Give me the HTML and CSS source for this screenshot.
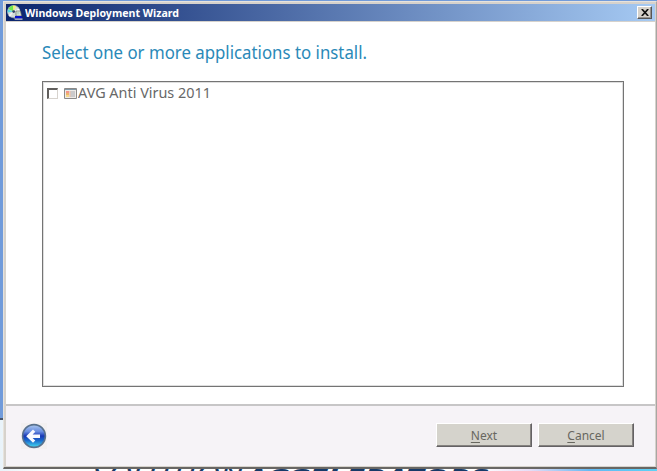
FILE: index.html
```html
<!DOCTYPE html>
<html lang="en">
<head>
<meta charset="utf-8">
<title>Windows Deployment Wizard</title>
<link rel="stylesheet" href="styles.css">
</head>
<body>
<div class="desktop">
  <div class="brand" aria-hidden="true"><svg width="420" height="24"><text class="thin" x="0" y="15" textLength="151" lengthAdjust="spacingAndGlyphs">SOLUTION</text><text class="bold" x="153" y="18" textLength="243" lengthAdjust="spacingAndGlyphs">ACCELERATORS</text></svg></div>
  <main class="window">
    <header class="titlebar">
      <svg class="app-icon" width="16" height="16" viewBox="0 0 16 16">
        <circle cx="6.7" cy="6.6" r="6.2" fill="#d5dedb" stroke="#a5adb5" stroke-width=".7"/>
        <path d="M6.7 6.6 1.2 4Q3 1 6 .6Z" fill="#6ce84c"/>
        <path d="M6.7 6.6 6 .5 9 1Z" fill="#f3ef70"/>
        <path d="M6.7 6.6.6 7.5.9 4.6Z" fill="#54dce5"/>
        <path d="M6.7 6.6 12 3.5 13 6Z" fill="#fff"/>
        <path d="M6.7 6.6 3 12 1.4 10Z" fill="#f5f4f5"/>
        <circle cx="6.7" cy="6.6" r="1.4" fill="#344568"/>
        <path d="M9 6h4.5l1 5H9Z" fill="#e8eadf" stroke="#58645d" stroke-width=".7"/>
        <path d="M10 7h2.5v2.5H10Z" fill="#b5d5c3"/>
        <path d="M8 11h6.5l.8 2.5H8Z" fill="#0710cc"/>
        <path d="M7 13.5h8.5v1.2H8Z" fill="#c9ccd7"/>
      </svg>
      <span class="title"><svg width="156" height="16"><text x="0" y="12" textLength="154" lengthAdjust="spacingAndGlyphs">Windows Deployment Wizard</text></svg></span>
      <button class="close" aria-label="Close"><svg width="8" height="7" viewBox="0 0 8 7"><path d="M.8 0 7.2 7M7.2 0 .8 7" stroke="#111" stroke-width="1.7"/></svg></button>
    </header>
    <section class="content">
      <h1><svg width="340" height="30"><text x="0" y="18" textLength="325" lengthAdjust="spacingAndGlyphs">Select one or more applications to install.</text></svg></h1>
      <div class="list">
        <label class="item">
          <span class="check"></span>
          <svg class="item-icon" width="13" height="11" viewBox="0 0 13 11">
            <path d="M.5.5h12v10H.5Z" fill="#eeeae6" stroke="#8b8988"/>
            <path d="M1 1.5h11" stroke="#8097a4"/>
            <path d="M2 3h3v2H2Z" fill="#f59589"/><path d="M2 5h3v2H2Z" fill="#edb36d"/><path d="M2 7h3v2H2Z" fill="#f5d889"/>
            <path d="M6.5 4H11M6.5 6H11M6.5 8H11" stroke="#a8a9b0"/>
            <path d="M6 3v6" stroke="#e2a17e" stroke-width=".7"/>
          </svg>
          <svg class="name" width="140" height="20"><text x="0" y="15" textLength="133" lengthAdjust="spacingAndGlyphs">AVG Anti Virus 2011</text></svg>
        </label>
      </div>
    </section>
    <footer class="footer">
      <button class="back" aria-label="Back">
        <svg width="26" height="26" viewBox="0 0 26 26">
          <defs><linearGradient id="blue" x1="0" y1="0" x2="0" y2="1"><stop offset="0" stop-color="#adc8ee"/><stop offset=".3" stop-color="#6a8fe2"/><stop offset=".5" stop-color="#1837b5"/><stop offset=".7" stop-color="#1a6bcd"/><stop offset="1" stop-color="#46dff2"/></linearGradient></defs>
          <circle cx="13" cy="13" r="11.4" fill="url(#blue)" stroke="#59718d" stroke-width="1.6"/>
          <path d="M5.2 13.2 12 6.6 14.3 8.8 11.6 11.5H19v3.5h-7.4l2.7 2.6L12 19.8Z" fill="#f8faff"/>
        </svg>
      </button>
      <div class="actions">
        <button class="button"><span><u>N</u>ext</span></button>
        <button class="button"><span><u>C</u>ancel</span></button>
      </div>
    </footer>
  </main>
</div>
</body>
</html>
```
FILE: styles.css
```css
* { box-sizing: border-box; }
body { margin: 0; width: 657px; height: 471px; overflow: hidden; font-family: "Noto Sans", "Open Sans", sans-serif; }
button { border: 0; padding: 0; font-family: inherit; }
svg { display: block; }
.desktop {
  position: relative;
  height: 471px;
  padding: 1px 0 0 3px;
  overflow: hidden;
  background:
    linear-gradient(#719bda, #719bda) 0 0 / 100% 1px no-repeat,
    linear-gradient(#46556d, #46556d) 0 418px / 3px 2px no-repeat,
    linear-gradient(#719bda, #719bda) 0 0 / 3px 418px no-repeat,
    linear-gradient(90deg, #e9f3fa 0, #fff 45px, #fff 480px, #e5ddf7 530px, #64b9f3 590px, #5ed2f5 657px);
}
.brand { position: absolute; left: 92px; top: 466px; height: 24px; }
.brand text { fill: #173a68; font-size: 21px; font-style: italic; }
.brand .thin { font-weight: 400; }
.brand .bold { font-weight: 700; }
.window {
  position: relative;
  width: 654px;
  height: 468px;
  display: flex;
  flex-direction: column;
  padding: 2px 1px 1px 2px;
  background: #d6d2cc;
  border: 1px solid #e7e3dd;
  border-right: 1px solid #a8a6a3;
  border-bottom: 2px solid #686664;
}
.titlebar {
  height: 17px;
  flex: none;
  display: flex;
  align-items: center;
  padding: 0 3px 0 1px;
  background: linear-gradient(90deg, #0b256d, #a6caf3);
}
.title { flex: 1; margin-left: 2px; }
.title text { fill: #fff; font-size: 11px; font-weight: 700; }
.close {
  display: grid;
  place-items: center;
  width: 15px;
  height: 13px;
  background: #d6d2cb;
  border: 1px solid;
  border-color: #fff #555 #555 #fff;
  box-shadow: inset -1px -1px #96928d;
}
.content { flex: 1; margin-top: 1px; padding: 19px 28px 0 36px; background: #fff; }
h1 { margin: 0; height: 40px; }
h1 text { fill: #2a89b8; font-size: 18px; font-weight: 400; }
.list { width: 582px; height: 306px; padding: 1px 4px; border: 1px solid #747474; outline: 1px solid #dedede; outline-offset: -2px; }
.item { display: flex; align-items: center; height: 20px; }
.check { width: 11px; height: 11px; border: 1px solid #d7d3ce; border-top: 2px solid #615f5d; border-left: 2px solid #615f5d; }
.item-icon { margin-left: 6px; }
.name { margin-left: 1px; }
.name text { fill: #686868; font-size: 14.5px; }
.footer {
  height: 62px;
  flex: none;
  display: flex;
  align-items: center;
  justify-content: space-between;
  padding: 0 21px 0 15px;
  border-top: 2px solid #c7c6c7;
  background: #f6f3f7;
}
.back { background: #f3f0f1; }
.actions { display: flex; gap: 6px; margin-top: -2px; }
.button {
  width: 96px;
  height: 24px;
  background: #d5d3cc;
  color: #68675f;
  font-size: 12px;
  border: 1px solid;
  border-color: #fff #646164 #646164 #fff;
  box-shadow: inset -1px -1px #85827f;
}
.button u { text-underline-offset: 2px; }
```
